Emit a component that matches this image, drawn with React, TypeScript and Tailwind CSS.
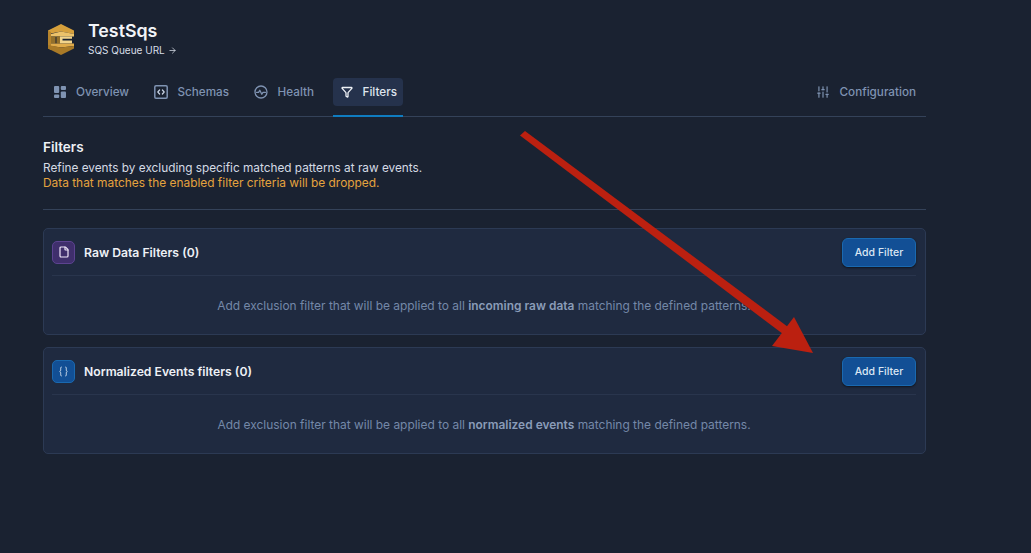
import React from 'react'
import { Funnel, SlidersVertical, ArrowRight, File } from 'lucide-react'

const font = 'font-["Inter","Noto_Sans",sans-serif]'

function QueueLogo() {
  return (
    <svg width="26" height="31" viewBox="0 0 26 31" aria-hidden>
      <path d="M0 6.5 13 0l13 6.5V10L13 7.5 0 10z" fill="#d6a03c" />
      <path d="M0 6.5v18l3 1.5V8z" fill="#b6842c" />
      <path d="M3 10 13 7.5 26 10v2.5H3z" fill="#ecc26a" />
      <path d="M3 12.5h4.5v7H3zM8.5 12.5H12v7H8.5z" fill="#94702a" />
      <path d="M12 12.5h12v2.2h-9.5v1.8H24v3H12z" fill="#f2d48c" />
      <path d="M3 19.5h23V22l-13 1.5L3 22z" fill="#e0ab4a" />
      <path d="M0 24.5 13 31l13-6.5V22l-13 1.5L0 21z" fill="#a97a27" />
    </svg>
  )
}

function OverviewIcon() {
  return (
    <svg width="12" height="12" viewBox="0 0 12 12" fill="currentColor" aria-hidden>
      <rect x="0" y="0" width="5.2" height="7" rx="1" />
      <rect x="6.8" y="0" width="5.2" height="4" rx="1" />
      <rect x="0" y="8.4" width="5.2" height="3.6" rx="1" />
      <rect x="6.8" y="5.4" width="5.2" height="6.6" rx="1" />
    </svg>
  )
}

function SchemasIcon() {
  return (
    <svg width="14" height="14" viewBox="0 0 14 14" fill="none" stroke="currentColor" strokeLinecap="round" strokeLinejoin="round" aria-hidden>
      <rect x="0.8" y="0.8" width="12.4" height="12.4" rx="1.2" strokeWidth="1.5" />
      <path d="M5.6 5 3.8 7l1.8 2M8.4 5l1.8 2-1.8 2" strokeWidth="1.2" stroke="#c9d4e4" />
    </svg>
  )
}

function HealthIcon() {
  return (
    <svg width="14" height="14" viewBox="0 0 14 14" fill="none" stroke="currentColor" strokeWidth="1.3" strokeLinecap="round" strokeLinejoin="round" aria-hidden>
      <circle cx="7" cy="7" r="6" />
      <path d="M2.6 7.4h2l1.2-2.2 2 4 1.2-1.8h2.4" />
    </svg>
  )
}

function BracesIcon() {
  return (
    <svg width="9" height="11" viewBox="0 0 9 11" fill="none" stroke="#dbe6f3" strokeWidth="1" aria-hidden>
      <path d="M2.6 1C1.6 1 1.7 2 1.7 3.5c0 1.2-.3 1.7-.9 2 .6.3.9.8.9 2C1.7 9 1.6 10 2.6 10" />
      <path d="M6.4 1c1 0 .9 1 .9 2.5 0 1.2.3 1.7.9 2-.6.3-.9.8-.9 2 0 1.5.1 2.5-.9 2.5" />
    </svg>
  )
}

function Tab({ icon, label, active = false }: { icon: React.ReactNode; label: string; active?: boolean }) {
  return (
    <div className={`-mb-px h-[39px] border-b-2 ${active ? 'ml-[2px] border-[#0f7cc0]' : 'border-transparent'}`}>
      <div className={`flex h-[28px] items-center gap-[10px] rounded-[4px] pl-[8px] text-[11.7px] font-medium ${active ? 'bg-[#25324c] pr-[6px] text-[#dfe5ee]' : 'pr-[8px] text-[#7f93b2]'}`}>
        {icon}
        <span className="pt-[2px]">{label}</span>
      </div>
    </div>
  )
}

function FilterCard({ icon, iconClass, title, children }: { icon: React.ReactNode; iconClass: string; title: string; children: React.ReactNode }) {
  return (
    <section className="h-[107px] rounded-[5px] border border-[#2c3a54] bg-[#1f2a40] pl-[8px] pr-[9px]">
      <div className="flex h-[47px] items-center justify-between border-b border-[#29354d]">
        <div className="flex items-center gap-[9px]">
          <div className={`flex h-[23px] w-[23px] items-center justify-center rounded-[5px] border ${iconClass}`}>{icon}</div>
          <h3 className="pt-[2px] text-[12.2px] font-semibold text-[#eef1f6]">{title}</h3>
        </div>
        <button className="h-[29px] w-[74px] rounded-[6px] border border-[#1a69b0] bg-[#124f95] pt-[1px] text-[10.5px] font-medium text-[#dbe6f3] shadow-[0_1px_2px_#0f1420]">
          Add Filter
        </button>
      </div>
      <p className="pt-[21px] text-center text-[11.95px] text-[#7488a8]">{children}</p>
    </section>
  )
}

export default function App() {
  return (
    <div className={`relative h-[553px] w-[1031px] overflow-hidden bg-[#1a2231] pl-[43px] ${font}`}>
      <div className="w-[883px]">
        <header className="flex h-[78px] items-center gap-[14px] pl-[5px] pt-[1px]">
          <QueueLogo />
          <div className="-mt-[2px]">
            <h1 className="text-[17.8px] leading-[22px] font-semibold text-[#f2f4f8]">TestSqs</h1>
            <div className="mt-[1px] flex items-center gap-[3px] text-[10px] leading-[14px] text-[#d7dde7]">
              SQS Queue URL <ArrowRight size={9} />
            </div>
          </div>
        </header>

        <nav className="flex h-[39px] items-start justify-between border-b border-[#344259] pl-[3px] pr-[2px]">
          <div className="flex gap-[8.5px]">
            <Tab icon={<OverviewIcon />} label="Overview" />
            <Tab icon={<SchemasIcon />} label="Schemas" />
            <Tab icon={<HealthIcon />} label="Health" />
            <Tab icon={<Funnel size={12} color="#eef1f6" strokeWidth={2.6} />} label="Filters" active />
          </div>
          <Tab icon={<SlidersVertical size={14} strokeWidth={2} />} label="Configuration" />
        </nav>

        <div className="mt-[21px] h-[72px] border-b border-[#344259]">
          <h2 className="text-[13.5px] leading-[18px] font-semibold text-[#eef1f6]">Filters</h2>
          <p className="mt-[4px] text-[11.8px] leading-[16px] text-[#d5dbe5]">Refine events by excluding specific matched patterns at raw events.</p>
          <p className="-mt-[1px] text-[11.9px] leading-[16px] text-[#e5a33e]">Data that matches the enabled filter criteria will be dropped.</p>
        </div>

        <div className="mt-[18px] flex flex-col gap-[12px]">
          <FilterCard
            icon={<File size={12} color="#eee6f8" strokeWidth={2.4} />}
            iconClass="border-[#5c4390] bg-[#3f2f6c]"
            title="Raw Data Filters (0)"
          >
            Add exclusion filter that will be applied to all <b className="font-semibold text-[#8a9cb8]">incoming raw data</b> matching the defined patterns.
          </FilterCard>
          <FilterCard
            icon={<BracesIcon />}
            iconClass="border-[#1a69b0] bg-[#124f95]"
            title="Normalized Events filters (0)"
          >
            Add exclusion filter that will be applied to all <b className="font-semibold text-[#8a9cb8]">normalized events</b> matching the defined patterns.
          </FilterCard>
        </div>
      </div>

      {/* annotation arrow drawn over the page */}
      <svg className="pointer-events-none absolute left-0 top-0" width="1031" height="553" aria-hidden>
        <path d="M520 135.5 525 131 788 327 783 334z" fill="#bb2010" />
        <path d="M813 353 772 346 794 317z" fill="#bb2010" />
      </svg>
    </div>
  )
}
